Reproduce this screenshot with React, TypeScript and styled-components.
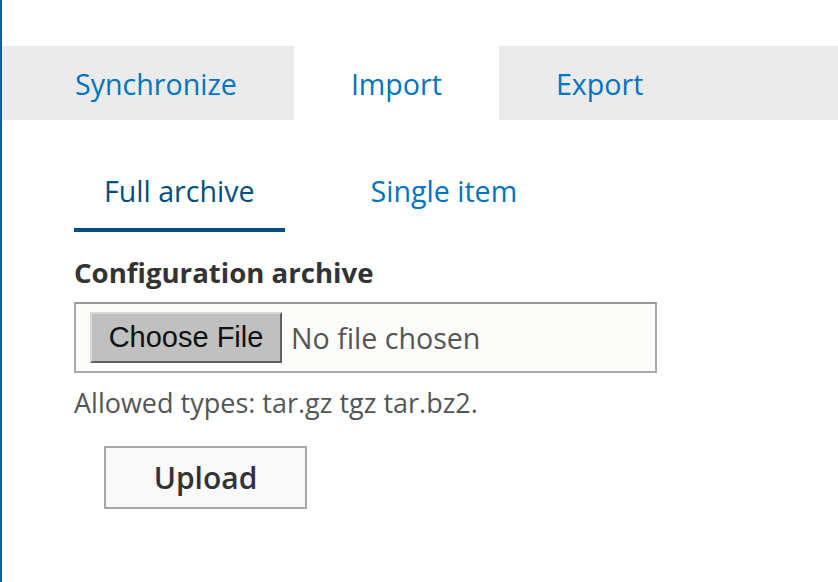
import React from "react";
import styled, { createGlobalStyle } from "styled-components";

const GlobalStyle = createGlobalStyle`
  html, body {
    margin: 0;
    padding: 0;
    background: #ffffff;
  }
  body {
    font-family: "Open Sans", "Noto Sans", sans-serif;
  }
`;

const Page = styled.div`
  min-height: 582px;
  box-sizing: border-box;
  border-left: 2px solid #17608f;
  padding-top: 46px;
`;

const PrimaryTabs = styled.nav`
  display: flex;
  height: 74px;
`;

const PrimaryTab = styled.a<{ $active?: boolean; $grow?: boolean; $lead?: number }>`
  display: flex;
  align-items: center;
  box-sizing: border-box;
  padding: 0 57px 0 ${({ $lead }) => $lead ?? 57}px;
  flex: ${({ $grow }) => ($grow ? "1" : "0 0 auto")};
  background: ${({ $active }) => ($active ? "#ffffff" : "#ebebeb")};
  color: #0074bd;
  font-size: 28.6px;
  text-decoration: none;
  cursor: pointer;
`;

const Content = styled.div`
  padding: 0 0 0 72px;
`;

const SecondaryTabs = styled.nav`
  display: flex;
  gap: 56px;
  height: 112px;
  align-items: flex-end;
`;

const SecondaryTab = styled.a<{ $active?: boolean }>`
  display: block;
  padding: 0 30px 18px;
  font-size: 28.6px;
  line-height: 38px;
  color: ${({ $active }) => ($active ? "#004f80" : "#0074bd")};
  border-bottom: 4px solid ${({ $active }) => ($active ? "#004f80" : "transparent")};
  text-decoration: none;
  cursor: pointer;
`;

const Field = styled.div`
  margin-top: 23px;
`;

const Label = styled.label`
  display: block;
  font-size: 27.6px;
  font-weight: 700;
  line-height: 34px;
  color: #333333;
`;

const FileBox = styled.div`
  margin-top: 13px;
  width: 583px;
  height: 71px;
  box-sizing: border-box;
  display: flex;
  align-items: center;
  gap: 9px;
  padding: 0 14px;
  border: 2px solid #a9a9a9;
  border-top-color: #999999;
  background: #fcfcfa;
`;

const ChooseButton = styled.span`
  display: inline-flex;
  align-items: center;
  justify-content: center;
  height: 51px;
  width: 192px;
  box-sizing: border-box;
  background: #c0c0c0;
  border: 2px solid;
  border-color: #d8d8d8 #5f5f5f #5f5f5f #d8d8d8;
  font-family: "Liberation Sans", Arial, sans-serif;
  font-size: 29px;
  color: #111111;
`;

const NoFile = styled.span`
  font-size: 28.6px;
  color: #555555;
`;

const Description = styled.div`
  margin-top: 12px;
  font-size: 27px;
  line-height: 36px;
  color: #555555;
`;

const Actions = styled.div`
  margin-top: 25px;
  padding-left: 30px;
`;

const UploadButton = styled.button`
  width: 203px;
  height: 63px;
  box-sizing: border-box;
  border: 2px solid #a8a8a8;
  background: #f9f9f9;
  font-family: "Open Sans", "Noto Sans", sans-serif;
  font-size: 30px;
  font-weight: 600;
  color: #333333;
  cursor: pointer;
`;

export default function App() {
  return (
    <>
      <GlobalStyle />
      <Page>
        <PrimaryTabs>
          <PrimaryTab $lead={73}>Synchronize</PrimaryTab>
          <PrimaryTab $active>Import</PrimaryTab>
          <PrimaryTab $grow>Export</PrimaryTab>
        </PrimaryTabs>
        <Content>
          <SecondaryTabs>
            <SecondaryTab $active>Full archive</SecondaryTab>
            <SecondaryTab>Single item</SecondaryTab>
          </SecondaryTabs>
          <Field>
            <Label>Configuration archive</Label>
            <FileBox>
              <ChooseButton>Choose File</ChooseButton>
              <NoFile>No file chosen</NoFile>
            </FileBox>
            <Description>Allowed types: tar.gz tgz tar.bz2.</Description>
          </Field>
          <Actions>
            <UploadButton>Upload</UploadButton>
          </Actions>
        </Content>
      </Page>
    </>
  );
}
